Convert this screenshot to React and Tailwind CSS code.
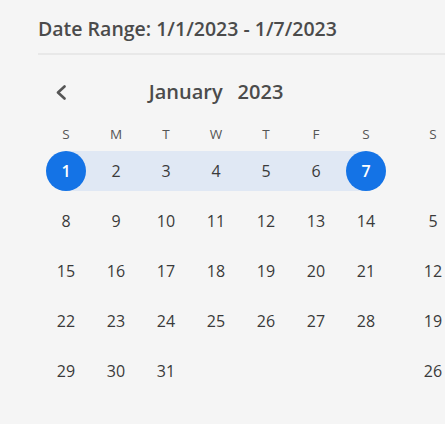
import React from "react";

const WEEKDAYS = ["S", "M", "T", "W", "T", "F", "S"];

const JAN = [
  [1, 2, 3, 4, 5, 6, 7],
  [8, 9, 10, 11, 12, 13, 14],
  [15, 16, 17, 18, 19, 20, 21],
  [22, 23, 24, 25, 26, 27, 28],
  [29, 30, 31, null, null, null, null],
];

const FEB = [
  [null, null, null, 1, 2, 3, 4],
  [5, 6, 7, 8, 9, 10, 11],
  [12, 13, 14, 15, 16, 17, 18],
  [19, 20, 21, 22, 23, 24, 25],
  [26, 27, 28, null, null, null, null],
];

function DayCell({ day, start, end, inRange }) {
  let band = "";
  if (start) band = "bg-[linear-gradient(to_right,transparent_50%,#e0e8f4_50%)]";
  else if (end) band = "bg-[linear-gradient(to_right,#e0e8f4_50%,transparent_50%)]";
  else if (inRange) band = "bg-[#e0e8f4]";

  return (
    <div className={`flex h-10 w-[50px] items-center justify-center ${band}`}>
      {day && (
        <span
          className={`flex h-10 w-10 items-center justify-center rounded-full text-[16px] ${
            start || end ? "bg-[#1473e6] font-semibold text-white" : "text-[#3a3a3a]"
          }`}
        >
          {day}
        </span>
      )}
    </div>
  );
}

function Month({ weeks, range, title, showPrev }) {
  return (
    <div className="flex w-[350px] shrink-0 flex-col">
      <div className="relative flex h-10 items-center justify-center">
        {showPrev && (
          <svg
            className="absolute left-[14px] top-[13px]"
            width="12"
            height="15"
            viewBox="0 0 12 15"
            fill="none"
          >
            <path d="M9.5 1.5 L3 7.5 L9.5 13.5" stroke="#555" strokeWidth="2.6" strokeLinecap="round" strokeLinejoin="round" />
          </svg>
        )}
        {title && (
          <div className="flex gap-[15px] text-[20px] font-semibold text-[#4b4b4b]">
            <span>{title[0]}</span>
            <span>{title[1]}</span>
          </div>
        )}
      </div>
      <div className="mt-2 grid h-[28px] grid-cols-7 items-center">
        {WEEKDAYS.map((w, i) => (
          <span key={i} className="text-center text-[13.5px] text-[#555]">
            {w}
          </span>
        ))}
      </div>
      <div className="mt-[3px] flex flex-col gap-[10px]">
        {weeks.map((week, r) => (
          <div key={r} className="flex">
            {week.map((d, c) => {
              const inRange = range && r === 0 && d != null;
              return (
                <DayCell
                  key={c}
                  day={d}
                  start={inRange && d === range[0]}
                  end={inRange && d === range[1]}
                  inRange={inRange && d > range[0] && d < range[1]}
                />
              );
            })}
          </div>
        ))}
      </div>
    </div>
  );
}

export default function App() {
  return (
    <div
      className="h-[424px] w-full overflow-hidden bg-[#f5f5f5] pl-[38px] pt-[17px]"
      style={{ fontFamily: '"Open Sans", "Noto Sans", sans-serif' }}
    >
      <h1 className="text-[19.5px] font-semibold leading-6 text-[#4b4b4b]">
        Date Range: 1/1/2023 - 1/7/2023
      </h1>
      <div className="mt-3 border-b-2 border-[#e8e8e8]" />
      <div className="ml-[3px] mt-[17px] flex gap-[17px]">
        <Month weeks={JAN} range={[1, 7]} title={["January", "2023"]} showPrev />
        <Month weeks={FEB} />
      </div>
    </div>
  );
}
